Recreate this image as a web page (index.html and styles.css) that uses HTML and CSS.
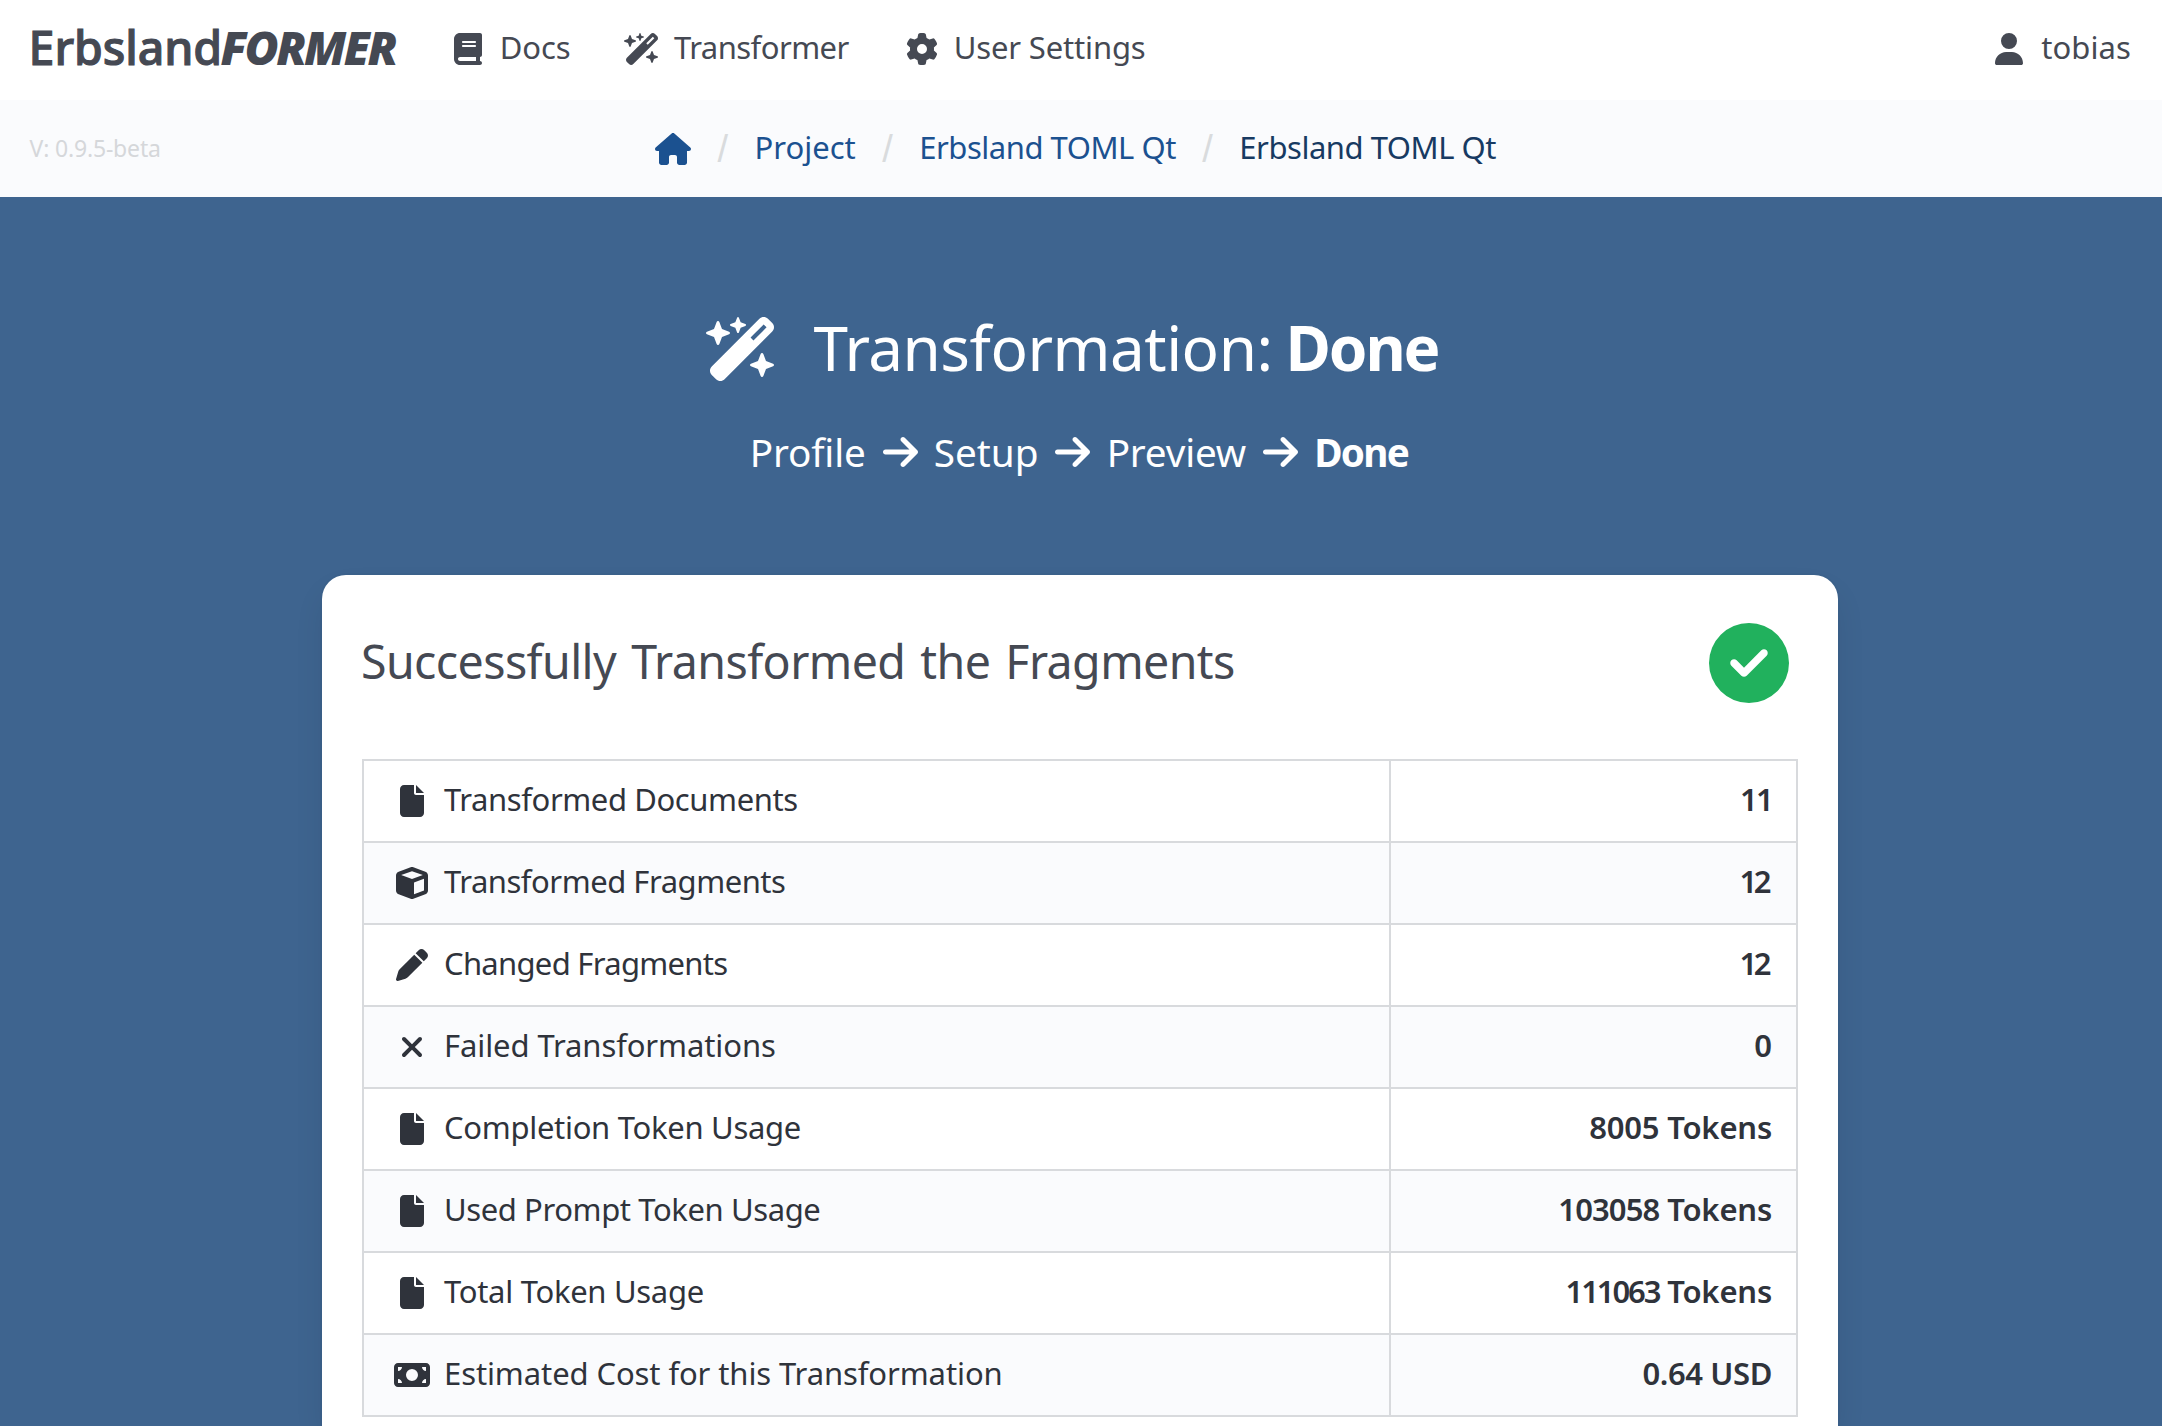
FILE: index.html
```html
<!DOCTYPE html>
<html lang="en">
<head>
<meta charset="utf-8">
<title>ErbslandFORMER – Transformation: Done</title>
<link rel="stylesheet" href="styles.css">
</head>
<body>
<svg class="sprite" aria-hidden="true">
  <symbol id="wand" viewBox="0 0 576 512"><path d="M234.7 42.7L197 56.8c-3 1.1-5 4-5 7.2s2 6.1 5 7.2l37.7 14.1L248.8 123c1.1 3 4 5 7.2 5s6.1-2 7.2-5l14.1-37.7L315 71.2c3-1.1 5-4 5-7.2s-2-6.1-5-7.2L277.3 42.7 263.2 5c-1.1-3-4-5-7.2-5s-6.1 2-7.2 5L234.7 42.7zM46.1 395.4c-18.7 18.7-18.7 49.1 0 67.9l34.6 34.6c18.7 18.7 49.1 18.7 67.9 0L529.9 116.5c18.7-18.7 18.7-49.1 0-67.9L495.3 14.1c-18.7-18.7-49.1-18.7-67.9 0L46.1 395.4zM484.6 82.6l-105 105-23.3-23.3 105-105 23.3 23.3zM7.5 117.2C3 118.9 0 123.2 0 128s3 9.1 7.5 10.8L64 160l21.2 56.5c1.7 4.5 6 7.5 10.8 7.5s9.1-3 10.8-7.5L128 160l56.5-21.2c4.5-1.7 7.5-6 7.5-10.8s-3-9.1-7.5-10.8L128 96 106.8 39.5C105.1 35 100.8 32 96 32s-9.1 3-10.8 7.5L64 96 7.5 117.2zm352 256c-4.5 1.7-7.5 6-7.5 10.8s3 9.1 7.5 10.8L416 416l21.2 56.5c1.7 4.5 6 7.5 10.8 7.5s9.1-3 10.8-7.5L480 416l56.5-21.2c4.5-1.7 7.5-6 7.5-10.8s-3-9.1-7.5-10.8L480 352l-21.2-56.5c-1.7-4.5-6-7.5-10.8-7.5s-9.1 3-10.8 7.5L416 352l-56.5 21.2z"/></symbol>
  <symbol id="book" viewBox="0 0 448 512"><path d="M96 0C43 0 0 43 0 96V416c0 53 43 96 96 96H384h32c17.7 0 32-14.3 32-32s-14.3-32-32-32V384c17.7 0 32-14.3 32-32V32c0-17.7-14.3-32-32-32H384 96zm0 384H352v64H96c-17.7 0-32-14.3-32-32s14.3-32 32-32zm32-240c0-8.8 7.2-16 16-16H336c8.8 0 16 7.2 16 16s-7.2 16-16 16H144c-8.8 0-16-7.2-16-16zm16 48H336c8.8 0 16 7.2 16 16s-7.2 16-16 16H144c-8.8 0-16-7.2-16-16s7.2-16 16-16z"/></symbol>
  <symbol id="gear" viewBox="0 0 512 512"><path d="M495.9 166.6c3.2 8.7 .5 18.4-6.4 24.6l-43.3 39.4c1.1 8.3 1.7 16.8 1.7 25.4s-.6 17.1-1.7 25.4l43.3 39.4c6.9 6.2 9.6 15.9 6.4 24.6c-4.4 11.9-9.7 23.3-15.8 34.3l-4.7 8.1c-6.6 11-14 21.4-22.1 31.2c-5.9 7.2-15.7 9.6-24.5 6.8l-55.7-17.7c-13.4 10.3-28.2 18.9-44 25.4l-12.5 57.1c-2 9.1-9 16.3-18.2 17.8c-13.8 2.3-28 3.5-42.5 3.5s-28.7-1.2-42.5-3.5c-9.2-1.5-16.2-8.7-18.2-17.8l-12.5-57.1c-15.8-6.5-30.6-15.1-44-25.4L83.1 425.9c-8.8 2.8-18.6 .3-24.5-6.8c-8.1-9.8-15.5-20.2-22.1-31.2l-4.7-8.1c-6.1-11-11.4-22.4-15.8-34.3c-3.2-8.7-.5-18.4 6.4-24.6l43.3-39.4C64.6 273.1 64 264.6 64 256s.6-17.1 1.7-25.4L22.4 191.2c-6.9-6.2-9.6-15.9-6.4-24.6c4.4-11.9 9.7-23.3 15.8-34.3l4.7-8.1c6.6-11 14-21.4 22.1-31.2c5.9-7.2 15.7-9.6 24.5-6.8l55.7 17.7c13.4-10.3 28.2-18.9 44-25.4l12.5-57.1c2-9.1 9-16.3 18.2-17.8C227.3 1.2 241.5 0 256 0s28.7 1.2 42.5 3.5c9.2 1.5 16.2 8.7 18.2 17.8l12.5 57.1c15.8 6.5 30.6 15.1 44 25.4l55.7-17.7c8.8-2.8 18.6-.3 24.5 6.8c8.1 9.8 15.5 20.2 22.1 31.2l4.7 8.1c6.1 11 11.4 22.4 15.8 34.3zM256 336a80 80 0 1 0 0-160 80 80 0 1 0 0 160z"/></symbol>
  <symbol id="user" viewBox="0 0 448 512"><path d="M224 256A128 128 0 1 0 224 0a128 128 0 1 0 0 256zm-45.7 48C79.8 304 0 383.8 0 482.3C0 498.7 13.3 512 29.7 512H418.3c16.4 0 29.7-13.3 29.7-29.7C448 383.8 368.2 304 269.7 304H178.3z"/></symbol>
  <symbol id="house" viewBox="0 0 576 512"><path d="M575.8 255.5c0 18-15 32.1-32 32.1h-32l.7 160.2c0 2.7-.2 5.4-.5 8.1V472c0 22.1-17.9 40-40 40H456c-1.1 0-2.2 0-3.3-.1c-1.4 .1-2.8 .1-4.2 .1H416 392c-22.1 0-40-17.9-40-40V448 384c0-17.7-14.3-32-32-32H256c-17.7 0-32 14.3-32 32v64 24c0 22.1-17.9 40-40 40H160 128.1c-1.5 0-3-.1-4.5-.2c-1.2 .1-2.4 .2-3.6 .2H104c-22.1 0-40-17.9-40-40V360c0-.9 0-1.9 .1-2.8V287.6H32c-18 0-32-14-32-32.1c0-9 3-17 10-24L266.4 8c7-7 15-8 22-8s15 2 21 7L564.8 231.5c8 7 12 15 11 24z"/></symbol>
  <symbol id="arrow" viewBox="0 0 448 512"><path d="M438.6 278.6c12.5-12.5 12.5-32.8 0-45.3l-160-160c-12.5-12.5-32.8-12.5-45.3 0s-12.5 32.8 0 45.3L338.8 224 32 224c-17.7 0-32 14.3-32 32s14.3 32 32 32l306.7 0L233.4 393.4c-12.5 12.5-12.5 32.8 0 45.3s32.8 12.5 45.3 0l160-160z"/></symbol>
  <symbol id="file" viewBox="0 0 384 512"><path d="M0 64C0 28.7 28.7 0 64 0H224V128c0 17.7 14.3 32 32 32H384V448c0 35.3-28.7 64-64 64H64c-35.3 0-64-28.7-64-64V64zm384 64H256V0L384 128z"/></symbol>
  <symbol id="cube" viewBox="0 0 512 512"><path d="M234.5 5.7c13.9-5 29.1-5 43.1 0l192 68.6C495 83.4 512 107.5 512 134.6V377.4c0 27-17 51.2-42.5 60.3l-192 68.6c-13.9 5-29.1 5-43.1 0l-192-68.6C17 428.6 0 404.5 0 377.4V134.6c0-27 17-51.2 42.5-60.3l192-68.6zM256 66L82.3 128 256 190l173.7-62L256 66zm32 368.6l160-57.1v-188L288 246.6v188z"/></symbol>
  <symbol id="pen" viewBox="0 0 512 512"><path d="M362.7 19.3L314.3 67.7 444.3 197.7l48.4-48.4c25-25 25-65.5 0-90.5L453.3 19.3c-25-25-65.5-25-90.5 0zm-71 71L58.6 323.5c-10.4 10.4-18 23.3-22.2 37.4L1 481.2C-1.5 489.7 .8 498.8 7 505s15.3 8.5 23.7 6.1l120.3-35.4c14.1-4.2 27-11.8 37.4-22.2L421.7 220.3 291.7 90.3z"/></symbol>
  <symbol id="xmark" viewBox="0 0 384 512"><path d="M342.6 150.6c12.5-12.5 12.5-32.8 0-45.3s-32.8-12.5-45.3 0L192 210.7 86.6 105.4c-12.5-12.5-32.8-12.5-45.3 0s-12.5 32.8 0 45.3L146.7 256 41.4 361.4c-12.5 12.5-12.5 32.8 0 45.3s32.8 12.5 45.3 0L192 301.3 297.4 406.6c12.5 12.5 32.8 12.5 45.3 0s12.5-32.8 0-45.3L237.3 256 342.6 150.6z"/></symbol>
  <symbol id="bill" viewBox="0 0 576 512"><path d="M64 64C28.7 64 0 92.7 0 128V384c0 35.3 28.7 64 64 64H512c35.3 0 64-28.7 64-64V128c0-35.3-28.7-64-64-64H64zm64 320H64V320c35.3 0 64 28.7 64 64zM64 192V128h64c0 35.3-28.7 64-64 64zM448 384c0-35.3 28.7-64 64-64v64H448zm64-192c-35.3 0-64-28.7-64-64h64v64zM288 160a96 96 0 1 1 0 192 96 96 0 1 1 0-192z"/></symbol>
  <symbol id="check" viewBox="0 0 512 512"><path d="M256 512A256 256 0 1 0 256 0a256 256 0 1 0 0 512zM369 209L241 337c-9.4 9.4-24.6 9.4-33.9 0l-64-64c-9.4-9.4-9.4-24.6 0-33.9s24.6-9.4 33.9 0l47 47L335 175c9.4-9.4 24.6-9.4 33.9 0s9.4 24.6 0 33.9z"/></symbol>
</svg>

<nav class="navbar">
  <a class="brand"><span class="brand-name">Erbsland</span><span class="brand-former">FORMER</span></a>
  <a class="nav-item nav-docs"><svg class="icon w28"><use href="#book"/></svg><span>Docs</span></a>
  <a class="nav-item nav-transformer"><svg class="icon w36"><use href="#wand"/></svg><span>Transformer</span></a>
  <a class="nav-item nav-settings"><svg class="icon w32"><use href="#gear"/></svg><span>User Settings</span></a>
  <a class="nav-item nav-user"><svg class="icon w28"><use href="#user"/></svg><span>tobias</span></a>
</nav>

<div class="subbar">
  <span class="version">V: 0.9.5-beta</span>
  <div class="crumbs">
    <a class="crumb"><svg class="icon w36"><use href="#house"/></svg></a>
    <span class="slash">/</span>
    <a class="crumb">Project</a>
    <span class="slash">/</span>
    <a class="crumb tight-5">Erbsland TOML Qt</a>
    <span class="slash">/</span>
    <a class="crumb current tight-5">Erbsland TOML Qt</a>
  </div>
</div>

<main class="hero">
  <h1 class="title"><svg class="title-icon"><use href="#wand"/></svg><span class="title-text">Transformation:</span><strong>Done</strong></h1>
  <div class="steps">
    <span class="tight-2">Profile</span><svg class="arrow"><use href="#arrow"/></svg>
    <span>Setup</span><svg class="arrow"><use href="#arrow"/></svg>
    <span class="tight-2">Preview</span><svg class="arrow"><use href="#arrow"/></svg>
    <strong>Done</strong>
  </div>

  <section class="card">
    <header class="card-head">
      <h2>Successfully Transformed the Fragments</h2>
      <svg class="check"><use href="#check"/></svg>
    </header>
    <table class="stats">
      <colgroup><col class="col-label"><col class="col-value"></colgroup>
      <tbody>
        <tr><td><div class="label"><i><svg class="icon w24"><use href="#file"/></svg></i><span class="tight-4">Transformed Documents</span></div></td><td><b class="tight-17">11</b></td></tr>
        <tr><td><div class="label"><i><svg class="icon w32"><use href="#cube"/></svg></i><span class="tight-5">Transformed Fragments</span></div></td><td><b class="twelve">12</b></td></tr>
        <tr><td><div class="label"><i><svg class="icon w32"><use href="#pen"/></svg></i><span class="tight-7">Changed Fragments</span></div></td><td><b class="twelve">12</b></td></tr>
        <tr><td><div class="label"><i><svg class="icon w24"><use href="#xmark"/></svg></i><span class="tight-1">Failed Transformations</span></div></td><td><b>0</b></td></tr>
        <tr><td><div class="label"><i><svg class="icon w24"><use href="#file"/></svg></i><span class="tight-3">Completion Token Usage</span></div></td><td><b class="tight-2">8005 Tokens</b></td></tr>
        <tr><td><div class="label"><i><svg class="icon w24"><use href="#file"/></svg></i><span class="tight-4">Used Prompt Token Usage</span></div></td><td><b class="tight-2"><span class="tight-11">103058</span> Tokens</b></td></tr>
        <tr><td><div class="label"><i><svg class="icon w24"><use href="#file"/></svg></i><span class="tight-3">Total Token Usage</span></div></td><td><b class="tight-2"><span class="tight-22">111063</span> Tokens</b></td></tr>
        <tr><td><div class="label"><i><svg class="icon w36"><use href="#bill"/></svg></i><span class="tight-1">Estimated Cost for this Transformation</span></div></td><td><b class="tight-4">0.64 USD</b></td></tr>
      </tbody>
    </table>
  </section>
</main>
</body>
</html>
```
FILE: styles.css
```css
* { box-sizing: border-box; }

body {
  margin: 0;
  height: 1426px;
  overflow: hidden;
  display: flex;
  flex-direction: column;
  font: 400 31px/42px "Noto Sans", sans-serif;
  color: #2f333b;
  background: #fff;
}

.sprite { display: none; }

.icon { display: block; flex: none; height: 32px; fill: currentColor; }
.w24 { width: 24px; }
.w28 { width: 28px; }
.w32 { width: 32px; }
.w36 { width: 36px; }

.tight-1 { letter-spacing: -0.1px; }
.tight-2 { letter-spacing: -0.2px; }
.tight-3 { letter-spacing: -0.3px; }
.tight-4 { letter-spacing: -0.4px; }
.tight-5 { letter-spacing: -0.48px; }
.tight-7 { letter-spacing: -0.7px; }
.tight-11 { letter-spacing: -0.9px; }
.tight-17 { letter-spacing: -1.7px; }
.tight-22 { letter-spacing: -2.1px; }

/* Top navigation */
.navbar {
  flex: none;
  display: flex;
  align-items: center;
  height: 100px;
  padding: 0 31px 2px 28.6px;
  color: #454953;
  white-space: nowrap;
}
.brand { display: flex; margin-bottom: 4px; font-size: 46.5px; line-height: 64px; }
.brand-name { font-weight: 500; letter-spacing: -0.1px; -webkit-text-stroke: 1.1px currentColor; }
.brand-former { margin-left: -1.4px; font-weight: 900; font-style: italic; letter-spacing: -2.5px; }
.nav-item { display: flex; align-items: center; }
.nav-item span { margin-bottom: 4px; }
.nav-docs { margin-left: 59px; gap: 17.6px; letter-spacing: -0.1px; }
.nav-transformer { margin-left: 53.6px; gap: 14px; letter-spacing: -0.55px; }
.nav-settings { margin-left: 57px; gap: 16px; letter-spacing: -0.16px; }
.nav-user { margin-left: auto; gap: 18px; letter-spacing: 0.1px; }

/* Breadcrumb bar */
.subbar {
  flex: none;
  display: flex;
  align-items: center;
  height: 97px;
  padding-left: 29.5px;
  background: #fafbfd;
  white-space: nowrap;
}
.version { width: 625.5px; padding-bottom: 2px; font-size: 23px; letter-spacing: -0.17px; color: #d5d7da; }
.crumbs { display: flex; align-items: center; color: #1b5190; }
.crumb { display: block; margin-bottom: 3px; }
.crumb .icon { margin-top: 4px; }
.current { color: #173a62; }
.slash {
  width: 10px;
  margin: 0 27px 0 26.5px;
  font: 38px/42px "Liberation Sans", sans-serif;
  color: #d9dbdd;
}

/* Page heading and progress steps */
.hero {
  flex: 1;
  min-height: 0;
  display: flex;
  flex-direction: column;
  align-items: center;
  background: #3e648f;
}
.title {
  display: flex;
  align-items: center;
  height: 84px;
  margin: 110px 0 0;
  padding-right: 18px;
  color: #fff;
  font-size: 62px;
  font-weight: 400;
  line-height: 84px;
  white-space: nowrap;
}
.title-icon { width: 72px; height: 64px; margin-right: 36px; fill: currentColor; }
.title-text, .title strong { margin-bottom: 4px; }
.title-text { letter-spacing: -0.5px; }
.title strong { margin-left: 13px; font-weight: 700; letter-spacing: -2.14px; }
.steps {
  display: flex;
  align-items: center;
  height: 54px;
  margin-top: 34px;
  padding-right: 4px;
  color: #fff;
  font-size: 38.7px;
  line-height: 54px;
}
.steps strong { font-weight: 700; letter-spacing: -1.7px; }
.arrow { width: 35px; height: 40px; margin: 0 16.2px 0 17px; fill: currentColor; }

/* Result card */
.card {
  width: 1516px;
  flex: 1;
  min-height: 0;
  margin: 96px 2px 0 0;
  padding: 48px 40px 0;
  border-radius: 24px 24px 0 0;
  background: #fff;
  box-shadow: 0 16px 32px -4px rgba(10, 10, 10, 0.1), 0 0 0 2px rgba(10, 10, 10, 0.02);
}
.card-head { display: flex; align-items: center; justify-content: space-between; height: 80px; padding-right: 9px; }
.card-head h2 {
  margin: 0 0 4px -1px;
  color: #454953;
  font-size: 46.5px;
  font-weight: 400;
  line-height: 64px;
  letter-spacing: -0.58px;
  word-spacing: 3.5px;
}
.check { width: 80px; height: 80px; fill: #21b15d; }

.stats {
  width: 1436px;
  margin-top: 56px;
  table-layout: fixed;
  border-collapse: collapse;
}
.col-label { width: 1027px; }
.col-value { width: 407px; }
.stats td { height: 82px; padding: 0 24px 0 28px; border: 2px solid #d8dadd; vertical-align: middle; }
.stats td + td { text-align: right; }
.stats tr:nth-child(even) td { background: #fafbfd; }
.stats b { position: relative; top: -2px; font-weight: 600; }
.stats .twelve { letter-spacing: -3.5px; margin-right: 4px; }
.label { display: flex; align-items: center; gap: 12px; white-space: nowrap; }
.label i { display: flex; justify-content: center; width: 40px; }
.label span { margin-bottom: 4px; }
```
